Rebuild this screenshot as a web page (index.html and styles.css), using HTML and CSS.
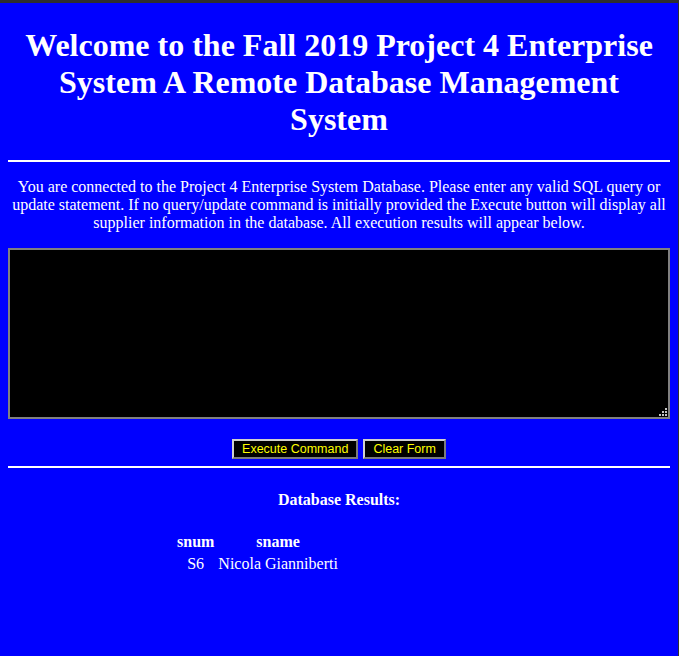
FILE: index.html
```html
<!DOCTYPE html>
<html>
<head>
<meta charset="utf-8">
<title>Project 4 Enterprise System</title>
<link rel="stylesheet" href="styles.css">
</head>
<body>
<h1 class="title">Welcome to the Fall 2019 Project 4 Enterprise System A Remote Database Management System</h1>
<hr class="rule">
<p class="intro">You are connected to the Project 4 Enterprise System Database. Please enter any valid SQL query or update statement. If no query/update command is initially provided the Execute button will display all supplier information in the database. All execution results will appear below.</p>
<form class="query-form">
  <div class="query-wrap">
    <textarea class="query-box" name="sql"></textarea>
    <svg class="grip" width="8" height="8" viewBox="0 0 8 8" aria-hidden="true">
      <rect x="6" y="0" width="2" height="2" fill="#c4c4c4"/>
      <rect x="3" y="3" width="2" height="2" fill="#c4c4c4"/>
      <rect x="6" y="3" width="2" height="2" fill="#c4c4c4"/>
      <rect x="0" y="6" width="2" height="2" fill="#c4c4c4"/>
      <rect x="3" y="6" width="2" height="2" fill="#c4c4c4"/>
      <rect x="6" y="6" width="2" height="2" fill="#c4c4c4"/>
    </svg>
  </div>
  <div class="actions">
    <button type="button" class="btn">Execute Command</button>
    <button type="reset" class="btn">Clear Form</button>
  </div>
</form>
<hr class="rule rule-tight">
<p class="results-title">Database Results:</p>
<table class="results">
  <thead>
    <tr><th>snum</th><th>sname</th></tr>
  </thead>
  <tbody>
    <tr><td>S6</td><td>Nicola Gianniberti</td></tr>
  </tbody>
</table>
</body>
</html>
```
FILE: styles.css
```css
html {
  background: #0000ff;
  border-top: 3px solid #2e2e2e;
  border-right: 1px solid #2e2e2e;
  min-height: 100%;
  box-sizing: border-box;
}
body {
  margin: 8px;
  color: #ffffff;
  font-family: "Liberation Serif", "Times New Roman", serif;
  font-size: 16px;
}
.title {
  font-size: 32px;
  font-weight: bold;
  text-align: center;
  margin: 16px 0 22px;
}
.rule {
  border: none;
  border-top: 2px solid #ffffff;
  height: 0;
  margin: 0;
}
.intro {
  text-align: center;
  margin: 16px 0;
}
.query-form {
  margin: 0;
}
.query-wrap {
  position: relative;
}
.query-box {
  display: block;
  box-sizing: border-box;
  width: 100%;
  height: 171px;
  margin: 0;
  background: #000000;
  color: #ffff00;
  border: 2px solid #808080;
  resize: none;
}
.grip {
  position: absolute;
  right: 3px;
  bottom: 3px;
  display: block;
}
.actions {
  display: flex;
  justify-content: center;
  gap: 5px;
  margin-top: 20px;
}
.btn {
  box-sizing: border-box;
  height: 20px;
  padding: 0 8px;
  background: #000000;
  color: #ffff00;
  border: 2px outset #d0d0d0;
  font-family: "Liberation Sans", Tahoma, sans-serif;
  font-size: 12.5px;
  line-height: 14px;
}
.rule-tight {
  margin-top: 7px;
}
.results-title {
  text-align: center;
  font-weight: bold;
  margin: 23px 0 21px;
}
.results {
  margin-left: 166px;
  border-spacing: 2px;
}
.results th,
.results td {
  padding: 1px;
  text-align: center;
}
```
